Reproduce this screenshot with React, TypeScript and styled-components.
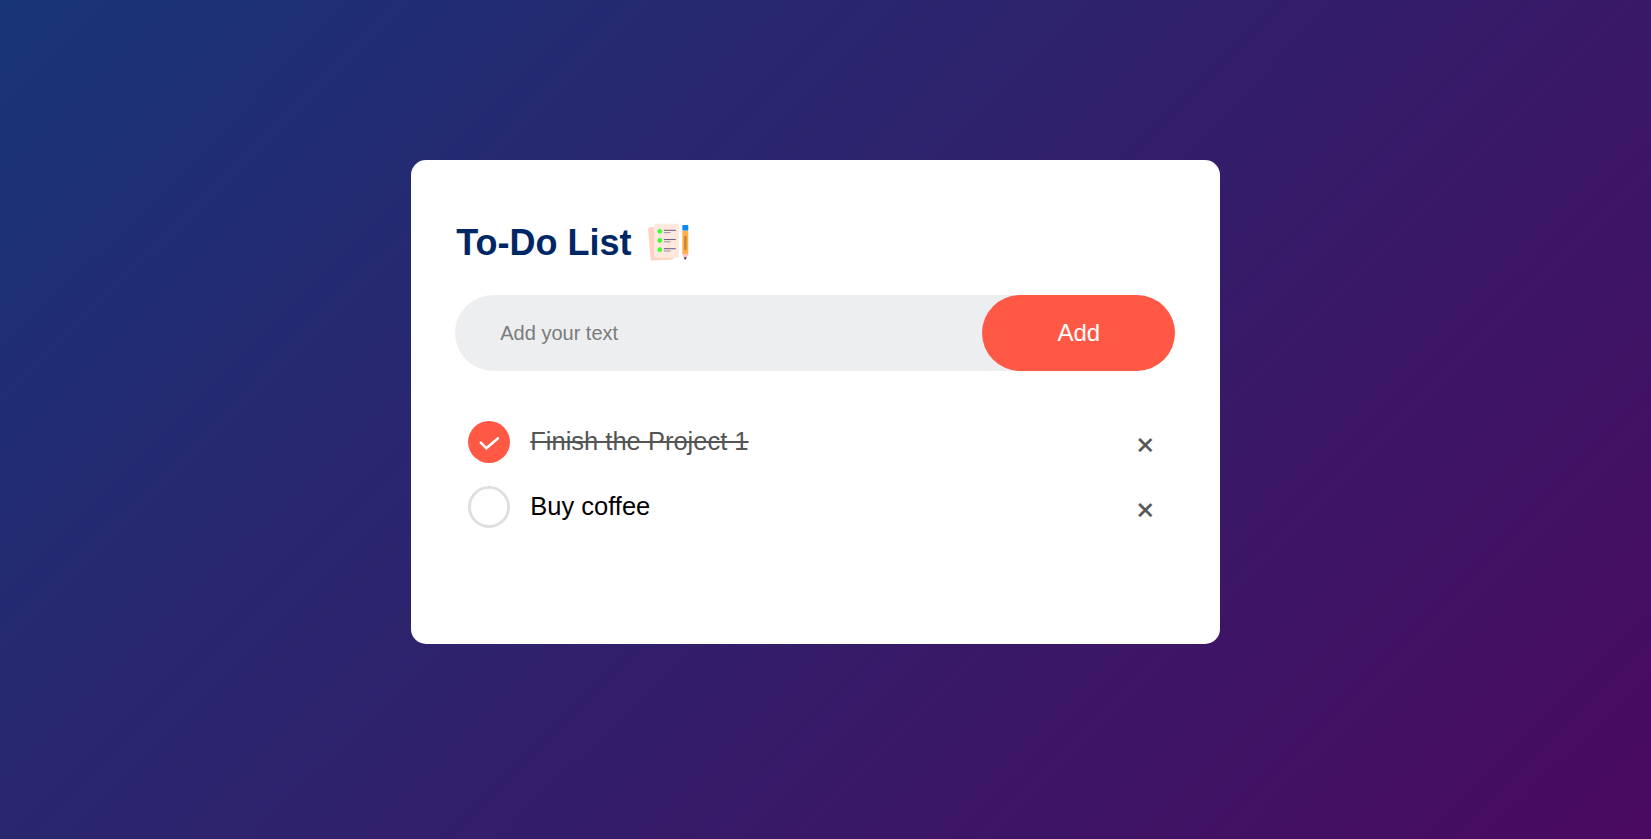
import React, { useState } from "react";
import styled, { createGlobalStyle } from "styled-components";

const GlobalStyle = createGlobalStyle`
  * { margin: 0; padding: 0; box-sizing: border-box; }
  body { font-family: "Liberation Sans", Arial, sans-serif; }
`;

const Page = styled.div`
  min-height: 100vh;
  padding: 160px 20px 0 0;
  background: linear-gradient(135deg, #183577, #4a0a60);
`;

const Card = styled.main`
  width: 809.5px;
  margin: 0 auto;
  padding: 60px 45px 105px 44.5px;
  border-radius: 15px;
  background: #fff;
`;

const Title = styled.h2`
  display: flex;
  align-items: center;
  height: 45px;
  margin-bottom: 30px;
  padding-left: 1px;
  color: #002765;
  font-size: 36px;
`;

const TitleIcon = styled.svg`
  width: 45px;
  height: 45px;
  margin: 3px 0 0 14px;
`;

const EntryRow = styled.form`
  display: flex;
  height: 76px;
  margin-bottom: 38px;
  padding-left: 30px;
  border-radius: 45px;
  background: #edeef0;
`;

const EntryInput = styled.input`
  flex: 1;
  min-width: 0;
  padding: 15px;
  border: none;
  outline: none;
  background: transparent;
  font: 20px "Liberation Sans", Arial, sans-serif;
  &::placeholder { color: #7b7b7b; }
`;

const AddButton = styled.button`
  width: 193px;
  border: none;
  border-radius: 60px;
  background: #ff5945;
  color: #fff;
  font: 24px "Liberation Sans", Arial, sans-serif;
  cursor: pointer;
`;

const TaskList = styled.ul`
  list-style: none;
`;

const TaskRow = styled.li`
  display: flex;
  align-items: center;
  height: 65px;
  padding-left: 12.5px;
  cursor: pointer;
`;

const Mark = styled.svg`
  width: 42px;
  height: 42px;
  margin-right: 20.5px;
`;

const TaskText = styled.span<{ $done: boolean }>`
  flex: 1;
  font-size: 25.5px;
  line-height: 29px;
  color: ${(p) => (p.$done ? "#555" : "#000")};
  text-decoration: ${(p) => (p.$done ? "line-through" : "none")};
  text-decoration-thickness: 2px;
`;

const RemoveButton = styled.button`
  width: 60px;
  height: 60px;
  margin-top: 6px;
  border: none;
  background: transparent;
  color: #555;
  font: 30px/60px "Liberation Sans", Arial, sans-serif;
  -webkit-text-stroke: 0.5px #555;
  cursor: pointer;
`;

const ChecklistIcon = () => (
  <TitleIcon viewBox="0 0 45 45" aria-hidden="true">
    <path d="M3.2 5.3 24 4.4 27.6 35.8Q27.7 37.3 26.2 37.5L6.5 38.6Q4.8 38.7 4.6 37L2.2 7Q2.1 5.4 3.2 5.3Z" fill="#ffd0c3" />
    <rect x="8" y="1.8" width="25" height="34" rx="1.8" fill="#ffe9de" />
    {[9.3, 18.5, 27.7].map((y) => (
      <g key={y}>
        <circle cx="13.8" cy={y} r="2.4" fill="#45fb38" />
        <path d={`M17.8 ${y - 1}H29.8`} stroke="#74628c" strokeWidth="1.1" />
        <path d={`M17.8 ${y + 1.3}H24.6`} stroke="#a694ad" strokeWidth="1.1" />
      </g>
    ))}
    <rect x="36.3" y="8.5" width="6" height="24" fill="#ffb04c" />
    <rect x="38.2" y="13.8" width="2.3" height="14" fill="#c48634" />
    <rect x="36.3" y="3" width="6" height="5.6" rx="0.8" fill="#088bf5" />
    <path d="M36.3 32.2h6l-1.7 4h-2.6z" fill="#fbc3c4" />
    <path d="M38 35.3h2.6l-.6 2.2h-1.4z" fill="#454047" />
  </TitleIcon>
);

const StatusMark = ({ done }: { done: boolean }) => (
  <Mark viewBox="0 0 42 42" aria-hidden="true">
    {done ? (
      <>
        <circle cx="21" cy="21" r="21" fill="#ff5945" />
        <path d="M12.8 21.6 18.4 27.2 30 17.2" fill="none" stroke="#fff" strokeWidth="2.5" strokeLinecap="round" />
      </>
    ) : (
      <circle cx="21" cy="21" r="19.6" fill="#fff" stroke="#dedede" strokeWidth="2.8" />
    )}
  </Mark>
);

export default function App() {
  const [tasks, setTasks] = useState([
    { id: 1, text: "Finish the Project 1", done: true },
    { id: 2, text: "Buy coffee", done: false },
  ]);
  const [draft, setDraft] = useState("");

  const addTask = (e: React.FormEvent) => {
    e.preventDefault();
    if (!draft.trim()) return;
    setTasks([...tasks, { id: Date.now(), text: draft, done: false }]);
    setDraft("");
  };
  const toggle = (id: number) =>
    setTasks(tasks.map((t) => (t.id === id ? { ...t, done: !t.done } : t)));
  const remove = (e: React.MouseEvent, id: number) => {
    e.stopPropagation();
    setTasks(tasks.filter((t) => t.id !== id));
  };

  return (
    <Page>
      <GlobalStyle />
      <Card>
        <Title>
          To-Do List <ChecklistIcon />
        </Title>
        <EntryRow onSubmit={addTask}>
          <EntryInput placeholder="Add your text" value={draft} onChange={(e) => setDraft(e.target.value)} />
          <AddButton type="submit">Add</AddButton>
        </EntryRow>
        <TaskList>
          {tasks.map((t) => (
            <TaskRow key={t.id} onClick={() => toggle(t.id)}>
              <StatusMark done={t.done} />
              <TaskText $done={t.done}>{t.text}</TaskText>
              <RemoveButton type="button" onClick={(e) => remove(e, t.id)}>×</RemoveButton>
            </TaskRow>
          ))}
        </TaskList>
      </Card>
    </Page>
  );
}
